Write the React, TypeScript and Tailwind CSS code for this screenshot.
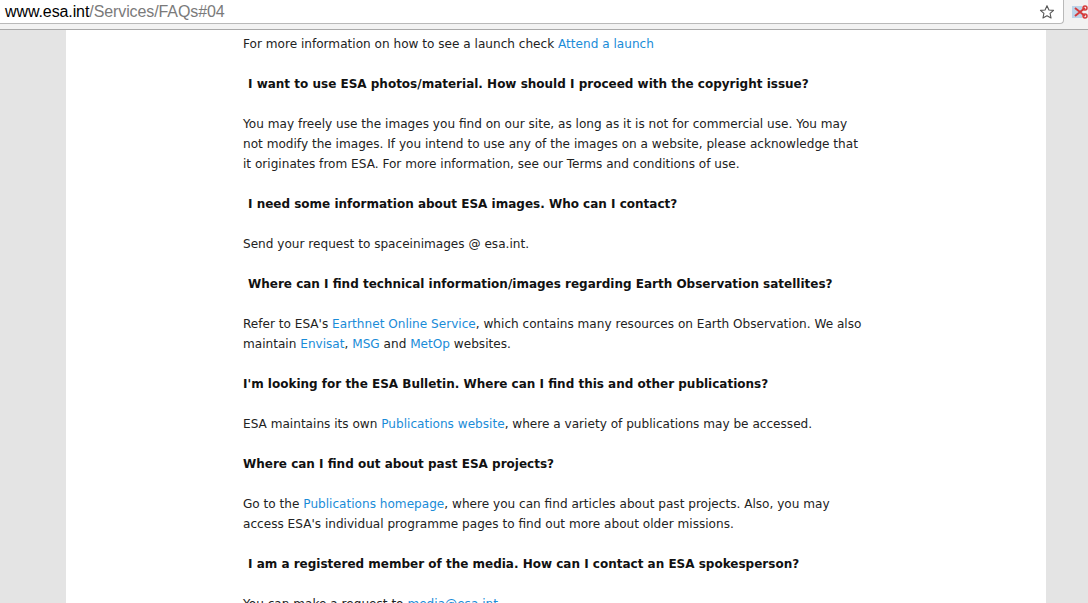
import React from "react";

const A = ({ children }: { children: React.ReactNode }) => (
  <a className="text-[#1a8cd8]">{children}</a>
);

const H = ({ children, indent }: { children: React.ReactNode; indent?: boolean }) => (
  <p className={`font-bold text-[12px] text-[#111] whitespace-nowrap ${indent ? "pl-[5px]" : ""}`}>{children}</p>
);

export default function App() {
  return (
    <div className="w-[1088px] h-[603px] overflow-hidden bg-[#e4e4e4] flex flex-col" style={{ fontFamily: "'DejaVu Sans', Verdana, sans-serif" }}>
      <div className="h-[30px] shrink-0 bg-[#f2f2f2] border-b border-[#a9a9a9] flex">
        <div className="w-[1064px] h-[24px] bg-white border-b border-r border-[#b9b9b9] rounded-br-[4px] flex items-center justify-between pl-[5px] pr-[8px]">
          <div className="text-[16px] leading-none tracking-[-0.1px]" style={{ fontFamily: "'Liberation Sans', Arial, sans-serif" }}>
            <span className="text-black">www.esa.int</span>
            <span className="text-[#7a7a7a]">/Services/FAQs#04</span>
          </div>
          <svg width="16" height="16" viewBox="0 0 24 24" fill="none" stroke="#555" strokeWidth="1.6" strokeLinejoin="round">
            <polygon points="12,2.5 14.9,8.9 21.8,9.6 16.6,14.2 18.1,21 12,17.5 5.9,21 7.4,14.2 2.2,9.6 9.1,8.9" />
          </svg>
        </div>
        <div className="flex-1 flex items-start pt-[4px] pl-[8px]">
          <svg width="16" height="16" viewBox="0 0 16 16">
            <rect x="0" y="2" width="10" height="12" fill="#bcd3e8" />
            <path d="M3 4 L13 12 M3 12 L13 4" stroke="#d43a3a" strokeWidth="2" />
            <circle cx="13" cy="4" r="2" fill="none" stroke="#d43a3a" strokeWidth="1.5" />
            <circle cx="13" cy="12" r="2" fill="none" stroke="#d43a3a" strokeWidth="1.5" />
          </svg>
        </div>
      </div>
      <div className="flex-1 flex pl-[66px]">
        <div className="w-[980px] bg-white pl-[177px] pt-[4px]">
          <div className="w-[623px] text-[12.1px] leading-[20px] text-[#222] flex flex-col gap-[20px]">
            <p>For more information on how to see a launch check <A>Attend a launch</A></p>
            <H indent>I want to use ESA photos/material. How should I proceed with the copyright issue?</H>
            <p>You may freely use the images you find on our site, as long as it is not for commercial use. You may not modify the images. If you intend to use any of the images on a website, please acknowledge that it originates from ESA. For more information, see our Terms and conditions of use.</p>
            <H indent>I need some information about ESA images. Who can I contact?</H>
            <p>Send your request to spaceinimages @ esa.int.</p>
            <H indent>Where can I find technical information/images regarding Earth Observation satellites?</H>
            <p>Refer to ESA's <A>Earthnet Online Service</A>, which contains many resources on Earth Observation. We also maintain <A>Envisat</A>, <A>MSG</A> and <A>MetOp</A> websites.</p>
            <H>I'm looking for the ESA Bulletin. Where can I find this and other publications?</H>
            <p>ESA maintains its own <A>Publications website</A>, where a variety of publications may be accessed.</p>
            <H>Where can I find out about past ESA projects?</H>
            <p>Go to the <A>Publications homepage</A>, where you can find articles about past projects. Also, you may access ESA's individual programme pages to find out more about older missions.</p>
            <H indent>I am a registered member of the media. How can I contact an ESA spokesperson?</H>
            <p>You can make a request to <A>media@esa.int</A>.</p>
          </div>
        </div>
      </div>
    </div>
  );
}
